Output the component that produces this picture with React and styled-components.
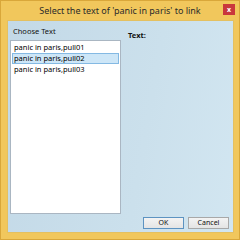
import React from "react";
import styled, { createGlobalStyle } from "styled-components";

const Global = createGlobalStyle`
  html, body { margin: 0; padding: 0; background: #f0c75e; }
  * { box-sizing: border-box; }
`;

const Window = styled.div`
  width: 240px;
  height: 240px;
  display: flex;
  flex-direction: column;
  background: #f1c75c;
  border: 1px solid #d9a73a;
  font-family: "Noto Sans", "Open Sans", sans-serif;
  color: #111;
`;

const TitleBar = styled.div`
  height: 19px;
  display: flex;
  align-items: center;
  justify-content: center;
  position: relative;
  font-size: 9px;
  color: #2b2b2b;
`;

const CloseBtn = styled.div`
  position: absolute;
  right: 4px;
  top: 3px;
  width: 12px;
  height: 11px;
  background: #c9373c;
  color: #fff;
  font-size: 7px;
  font-weight: bold;
  display: flex;
  align-items: center;
  justify-content: center;
  line-height: 1;
`;

const Client = styled.div`
  flex: 1;
  margin: 0 5px 6px 6px;
  background: linear-gradient(100deg, #c3d9e7 0%, #cbe0ec 60%, #d2e6f1 100%);
  border: 1px solid #e4c060;
  display: flex;
  flex-direction: column;
  padding: 5px 4px 3px 2px;
`;

const Main = styled.div`
  flex: 1;
  display: flex;
  gap: 7px;
`;

const LeftCol = styled.div`
  width: 111px;
  display: flex;
  flex-direction: column;
`;

const Label = styled.div`
  font-size: 7.5px;
  padding-left: ${(p) => p.$indent || 0}px;
  padding-top: ${(p) => p.$top || 0}px;
  font-weight: ${(p) => (p.$bold ? 700 : 400)};
  height: 14px;
  line-height: 11px;
`;

const ListBox = styled.div`
  flex: 1;
  background: #fff;
  border: 1px solid #aab6c2;
  padding: 1px 1px;
  display: flex;
  flex-direction: column;
`;

const Item = styled.div`
  height: 11px;
  font-size: 7.5px;
  line-height: 9px;
  padding-left: 1px;
  color: #000;
  border: 1px solid ${(p) => (p.$sel ? "#84b9e3" : "transparent")};
  background: ${(p) => (p.$sel ? "#cde6f7" : "transparent")};
`;

const Footer = styled.div`
  height: 15px;
  display: flex;
  justify-content: flex-end;
  align-items: flex-end;
  gap: 4px;
`;

const Button = styled.div`
  width: 41px;
  height: 12px;
  font-size: 7px;
  line-height: 10px;
  text-align: center;
  border: 1px solid ${(p) => (p.$default ? "#5d93c1" : "#a8a8a8")};
  background: linear-gradient(180deg, #f3f3f3 0%, #e4e4e4 100%);
  color: #111;
`;

export default function App() {
  return (
    <>
      <Global />
      <Window>
        <TitleBar>
          Select the text of 'panic in paris' to link
          <CloseBtn>x</CloseBtn>
        </TitleBar>
        <Client>
          <Main>
            <LeftCol>
              <Label $indent={3}>Choose Text</Label>
              <ListBox>
                <Item>panic in paris,pull01</Item>
                <Item $sel>panic in paris,pull02</Item>
                <Item>panic in paris,pull03</Item>
              </ListBox>
            </LeftCol>
            <div>
              <Label $bold $top={4}>Text:</Label>
            </div>
          </Main>
          <Footer>
            <Button $default>OK</Button>
            <Button>Cancel</Button>
          </Footer>
        </Client>
      </Window>
    </>
  );
}
